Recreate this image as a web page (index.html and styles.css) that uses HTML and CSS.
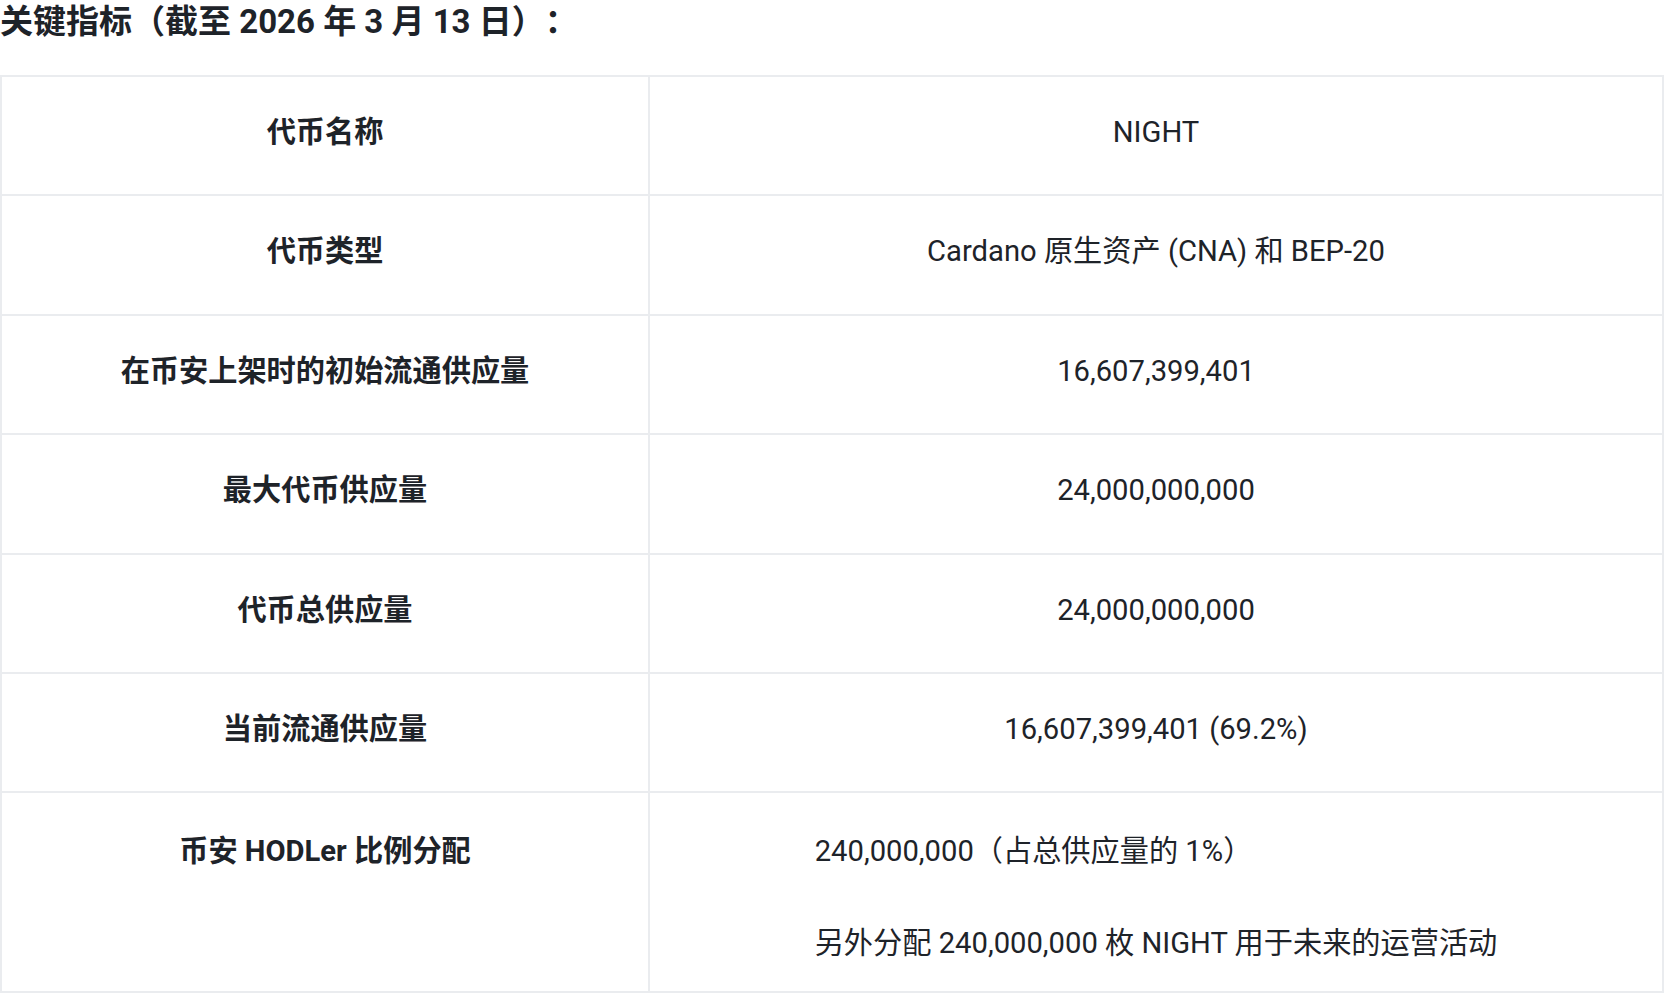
FILE: index.html
```html
<!DOCTYPE html>
<html lang="zh-CN">
<head>
<meta charset="utf-8">
<title>关键指标</title>
<link rel="stylesheet" href="styles.css">
</head>
<body>
<h2 class="title">关键指标（截至 2026 年 3 月 13 日）：</h2>
<table class="metrics">
  <colgroup>
    <col class="col-label">
    <col class="col-value">
  </colgroup>
  <tbody>
    <tr><td class="label">代币名称</td><td class="value">NIGHT</td></tr>
    <tr><td class="label">代币类型</td><td class="value">Cardano 原生资产 (CNA) 和 BEP-20</td></tr>
    <tr><td class="label">在币安上架时的初始流通供应量</td><td class="value">16,607,399,401</td></tr>
    <tr><td class="label">最大代币供应量</td><td class="value">24,000,000,000</td></tr>
    <tr><td class="label">代币总供应量</td><td class="value">24,000,000,000</td></tr>
    <tr><td class="label">当前流通供应量</td><td class="value">16,607,399,401 (69.2%)</td></tr>
    <tr class="multi">
      <td class="label">币安 HODLer 比例分配</td>
      <td class="value">
        <div class="stack">
          <p>240,000,000（占总供应量的 1%）</p>
          <p>另外分配 240,000,000 枚 NIGHT 用于未来的运营活动</p>
        </div>
      </td>
    </tr>
  </tbody>
</table>
</body>
</html>
```

FILE: styles.css
```css
html, body {
  margin: 0;
  padding: 0;
  background: #ffffff;
}

body {
  font-family: Roboto, "Noto Sans CJK SC", sans-serif;
  color: #1e2329;
  text-spacing-trim: space-all;
}

.title {
  margin: 0 0 31px 0;
  font-size: 33px;
  line-height: 44px;
  font-weight: 700;
  color: #1e2329;
}

.metrics {
  width: 1664px;
  border-collapse: collapse;
  border: 2px solid #eaecef;
  font-size: 29.2px;
  line-height: 42.4px;
}

.col-label {
  width: 648px;
}

.metrics td {
  border: 2px solid #eaecef;
  padding: 34px 16px 41px;
  text-align: center;
  vertical-align: top;
}

.label {
  font-weight: 700;
}

.value {
  font-weight: 400;
}

.stack {
  display: inline-block;
  text-align: left;
}

.stack p {
  margin: 0;
}

.stack p + p {
  margin-top: 49px;
}

.multi td {
  padding-top: 37px;
  padding-bottom: 27px;
}
```
